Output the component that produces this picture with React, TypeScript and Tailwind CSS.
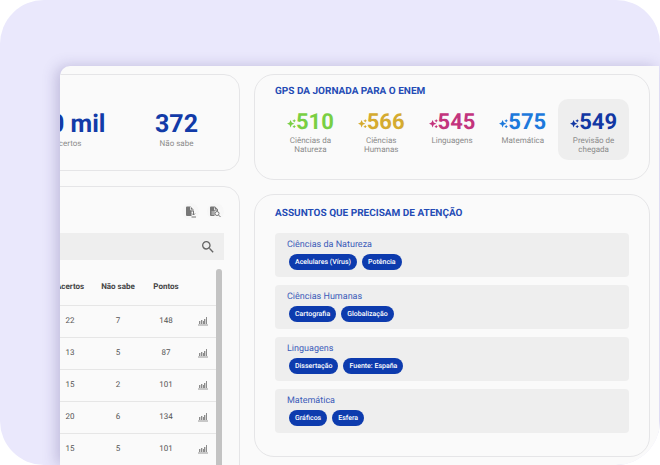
import { MdSearch } from "react-icons/md";

const scores = [
  { value: "510", label: "Ciências da Natureza", color: "text-[#79cf43]", box: "" },
  { value: "566", label: "Ciências Humanas", color: "text-[#d5ab30]", box: "" },
  { value: "545", label: "Linguagens", color: "text-[#c3347d]", box: "" },
  { value: "575", label: "Matemática", color: "text-[#1d79dc]", box: "" },
  { value: "549", label: "Previsão de chegada", color: "text-[#1237a3]", box: "bg-[#eeeeee]" },
];

const subjects = [
  { name: "Ciências da Natureza", topics: ["Acelulares (Vírus)", "Potência"] },
  { name: "Ciências Humanas", topics: ["Cartografia", "Globalização"] },
  { name: "Linguagens", topics: ["Dissertação", "Fuente: España"] },
  { name: "Matemática", topics: ["Gráficos", "Esfera"] },
];

const rows = [
  [22, 7, 148],
  [13, 5, 87],
  [15, 2, 101],
  [20, 6, 134],
  [15, 5, 101],
];

function Sparkles() {
  return (
    <svg viewBox="0 0 20 20" className="size-[9px] shrink-0" fill="currentColor" aria-hidden="true">
      <path d="M8 2l2.500 6 6 2.500-6 2.500-2.500 6-2.500-6-6-2.500 6-2.500z" />
      <path d="M16 0l1.300 2.700 2.700 1.300-2.700 1.300-1.300 2.700-1.300-2.700-2.700-1.300 2.700-1.300zM16 13l1.300 2.700 2.700 1.300-2.700 1.300-1.300 2.700-1.300-2.700-2.700-1.300 2.700-1.300z" />
    </svg>
  );
}

function FileDownload() {
  return (
    <svg viewBox="0 0 20 24" className="h-3 w-[10px]" aria-hidden="true">
      <path d="M2 1h7l6 6v4h-4v9H2a2 2 0 0 1-2-2V3a2 2 0 0 1 2-2z" fill="#777" />
      <path d="M9 2v6h5" fill="none" stroke="#fafafa" strokeWidth="1.500" />
      <path d="M15 10v8M12 15l3 3 3-3M11 22h9" fill="none" stroke="#777" strokeWidth="2" />
    </svg>
  );
}

function FileSearch() {
  return (
    <svg viewBox="0 0 22 24" className="h-3 w-[11px]" aria-hidden="true">
      <path d="M2 1h8l6 6v3H9v10H2a2 2 0 0 1-2-2V3a2 2 0 0 1 2-2z" fill="#777" />
      <path d="M9 3v5h5M3 12h5M3 16h5" fill="none" stroke="#fafafa" strokeWidth="1.500" />
      <circle cx="14" cy="15" r="4" fill="#fafafa" stroke="#777" strokeWidth="2" />
      <path d="M17 18l4 4" stroke="#777" strokeWidth="2" />
    </svg>
  );
}

function Bars() {
  return (
    <svg viewBox="0 0 10 10" className="size-[10px]" aria-hidden="true">
      <path d="M0 8h10v2H0z" fill="#c8c8c8" />
      <path d="M1 5h1v3H1zM3 4h1v4H3zM5 5h1v3H5zM6 3h1v5H6zM8 1h1v7H8z" fill="#8c8c8c" />
      <path d="M2 5h1v3H2zM4 4h1v4H4zM7 3h1v5H7z" fill="#d0d0d0" />
    </svg>
  );
}

function Stat({ value, label }: { value: string; label: string }) {
  return (
    <div className="w-[109px] text-center">
      <p className="text-[25px] leading-7 font-bold text-[#123ba8]">{value}</p>
      <p className="text-[8px] leading-[10px] text-[#8b8b8b]">{label}</p>
    </div>
  );
}

const card = "border border-[#e5e5e7] bg-[#fafafa]";

export default function App() {
  return (
    <div className="h-screen bg-white font-[Roboto,sans-serif] [text-rendering:geometricPrecision]">
      <div className="h-full overflow-hidden rounded-[44px] bg-[#eae8fc] pt-[66px] pr-px pl-[60px]">
        <main className="flex h-full gap-[14px] overflow-hidden rounded-tl-[10px] bg-[#fafafa] pt-2 pr-[9px] shadow-[-4px_0_14px_rgba(70,60,130,0.25)]">
          <div className="flex w-[180px] shrink-0 justify-end overflow-hidden">
            <div className="flex w-[420px] shrink-0 flex-col gap-[15px]">
              <section className={`${card} flex h-[97px] shrink-0 items-center justify-end rounded-2xl pt-[14px] pr-2`}>
                <Stat value="1,0 mil" label="Acertos" />
                <Stat value="372" label="Não sabe" />
              </section>
              <section className={`${card} shrink-0 rounded-2xl pt-4 pr-[15px] pb-8`}>
                <div className="flex justify-end gap-2">
                  <button aria-label="Baixar arquivo" className="grid size-[17px] place-items-center rounded-full bg-[#f7f7f7]">
                    <FileDownload />
                  </button>
                  <button aria-label="Pesquisar arquivo" className="grid size-[17px] place-items-center rounded-full bg-[#f7f7f7]">
                    <FileSearch />
                  </button>
                </div>
                <label className="mt-[13px] flex h-[27px] items-center bg-[#eeeeee] pr-2">
                  <input type="search" aria-label="Buscar" className="min-w-0 flex-1 bg-transparent text-[8px] outline-none" />
                  <MdSearch className="size-4 text-[#666]" />
                </label>
                <div className="mt-[9px] flex pr-[2px]">
                  <table className="flex-1 table-fixed border-collapse text-center text-[8px] text-[#555]">
                    <thead>
                      <tr className="h-9 border-b border-[#e6e6e6] text-[#444]">
                        <th />
                        <th className="w-12 p-0 font-bold">Acertos</th>
                        <th className="w-12 p-0 font-bold">Não sabe</th>
                        <th className="w-12 p-0 font-bold">Pontos</th>
                        <th className="w-[26px]" />
                      </tr>
                    </thead>
                    <tbody>
                      {rows.map((row, i) => (
                        <tr key={i} className="h-8 border-b border-[#e6e6e6]">
                          <td />
                          {row.map((cell, j) => (
                            <td key={j} className="p-0">{cell}</td>
                          ))}
                          <td className="p-0">
                            <button aria-label="Ver gráfico" className="mx-auto block">
                              <Bars />
                            </button>
                          </td>
                        </tr>
                      ))}
                    </tbody>
                  </table>
                  <div className="w-[6px] rounded-t-full bg-[#c3c3c3]" />
                </div>
              </section>
            </div>
          </div>

          <div className="flex min-w-0 flex-1 flex-col gap-[14px]">
            <section className={`${card} rounded-[20px] px-5 pt-[10px] pb-[19px]`}>
              <h2 className="text-[10px] leading-[14px] font-bold text-[#244bb5]">GPS DA JORNADA PARA O ENEM</h2>
              <ul className="grid grid-cols-5">
                {scores.map((s) => (
                  <li key={s.value} className={`${s.box} h-[61px] rounded-[10px] px-2 pt-[11px] text-center`}>
                    <p className={`${s.color} flex items-center justify-center text-[22px] leading-[26px] font-bold`}>
                      <Sparkles />
                      {s.value}
                    </p>
                    <p className="px-1 text-[8px] leading-[9px] text-[#8b8b8b]">{s.label}</p>
                  </li>
                ))}
              </ul>
            </section>

            <section className={`${card} rounded-[20px] px-5 pt-3 pb-[23px]`}>
              <h2 className="text-[10px] leading-[14px] font-bold text-[#244bb5]">ASSUNTOS QUE PRECISAM DE ATENÇÃO</h2>
              <div className="mt-3 flex flex-col gap-2">
                {subjects.map((s) => (
                  <article key={s.name} className="h-11 rounded-[4px] bg-[#eeeeee] px-3 pt-[6px]">
                    <h3 className="text-[9px] leading-3 text-[#3c5cb9]">{s.name}</h3>
                    <ul className="mt-[3px] flex gap-[5px] pl-[2px]">
                      {s.topics.map((t) => (
                        <li key={t} className="rounded-full bg-[#0d3bae] px-[6px] text-[7px] leading-4 font-medium text-white">
                          {t}
                        </li>
                      ))}
                    </ul>
                  </article>
                ))}
              </div>
            </section>
          </div>
        </main>
      </div>
    </div>
  );
}
